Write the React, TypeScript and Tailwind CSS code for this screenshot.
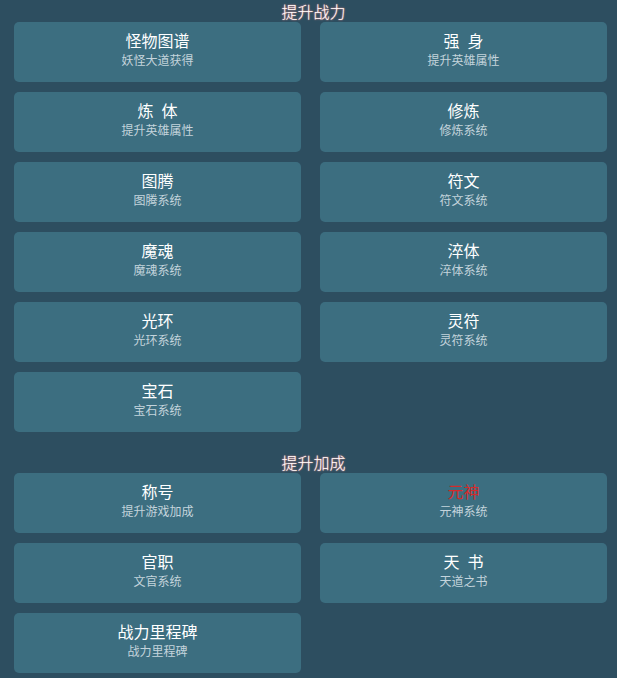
import React from "react";

type Entry = { name: string; desc: string; hot?: boolean };

const powerItems: Entry[] = [
  { name: "怪物图谱", desc: "妖怪大道获得" },
  { name: "强\u2002身", desc: "提升英雄属性" },
  { name: "炼\u2002体", desc: "提升英雄属性" },
  { name: "修炼", desc: "修炼系统" },
  { name: "图腾", desc: "图腾系统" },
  { name: "符文", desc: "符文系统" },
  { name: "魔魂", desc: "魔魂系统" },
  { name: "淬体", desc: "淬体系统" },
  { name: "光环", desc: "光环系统" },
  { name: "灵符", desc: "灵符系统" },
  { name: "宝石", desc: "宝石系统" },
];

const bonusItems: Entry[] = [
  { name: "称号", desc: "提升游戏加成" },
  { name: "元神", desc: "元神系统", hot: true },
  { name: "官职", desc: "文官系统" },
  { name: "天\u2002书", desc: "天道之书" },
  { name: "战力里程碑", desc: "战力里程碑" },
];

function SectionTitle({ text }: { text: string }) {
  return (
    <h2 className="h-[21px] pl-[6px] text-center text-[16px] font-light leading-[20px] text-white [text-shadow:0_0_2px_#e08c8c,0_0_1px_#d07a7a]">
      {text}
    </h2>
  );
}

function EntryCard({ item }: { item: Entry }) {
  return (
    <button className="flex h-[60px] flex-col items-center rounded-[5px] bg-[#3c6e80] pt-[8px] text-center">
      <span className={`whitespace-pre text-[16px] leading-[20px] ${item.hot ? "text-[#d42a2a]" : "text-white"}`}>
        {item.name}
      </span>
      <span className="text-[12px] leading-[20px] text-[#c4d4dc]">{item.desc}</span>
    </button>
  );
}

function Section({ title, items }: { title: string; items: Entry[] }) {
  return (
    <section>
      <SectionTitle text={title} />
      <div className="grid grid-cols-2 gap-x-[19px] gap-y-[10px]">
        {items.map((item) => (
          <EntryCard key={item.name} item={item} />
        ))}
      </div>
    </section>
  );
}

export default function App() {
  return (
    <div className="min-h-[678px] bg-[#2d4e60] pl-[14px] pr-[10px] pt-px font-['Noto_Sans_CJK_SC','Noto_Sans',sans-serif]">
      <Section title="提升战力" items={powerItems} />
      <div className="h-[20px]" />
      <Section title="提升加成" items={bonusItems} />
    </div>
  );
}
